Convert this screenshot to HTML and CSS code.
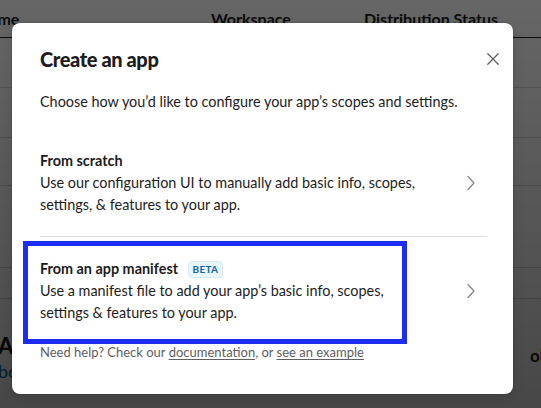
FILE: index.html
```html
<!DOCTYPE html>
<html lang="en">
<head>
<meta charset="utf-8">
<title>Create an app</title>
<link rel="stylesheet" href="styles.css">
</head>
<body>
<div class="page">
  <div class="page-inner">
    <div class="table">
      <div class="trow thead">
        <div class="c1">App Name</div>
        <div class="c2">Workspace</div>
        <div class="c3">Distribution Status</div>
      </div>
      <div class="trow r1"><div class="c1">Hos</div><div class="c2">Acme</div><div class="c3">Not distributed</div></div>
      <div class="trow r2"><div class="c1">Wh</div><div class="c2">Acme</div><div class="c3">Not distributed</div></div>
      <div class="trow r3"><div class="c1">Wh</div><div class="c2">Acme</div><div class="c3">Not distributed</div></div>
      <div class="trow tall"><div class="c1">Wh</div><div class="c2">Acme</div><div class="c3">Not distributed</div></div>
      <div class="trow short"></div>
    </div>
    <div class="section">
      <div class="sec-left">
        <div class="sec-title">Apps</div>
        <div class="sec-link">bots</div>
      </div>
      <div class="sec-right">ok</div>
    </div>
  </div>
</div>

<div class="overlay"></div>

<div class="modal" role="dialog">
  <div class="modal-head">
    <h1 class="modal-title">Create an app</h1>
    <button class="close" aria-label="Close">
      <svg width="12" height="12" viewBox="0 0 12 12"><path d="M0.8 0.8 L11.2 11.2 M11.2 0.8 L0.8 11.2" stroke="#616061" stroke-width="1.3" stroke-linecap="round" fill="none"/></svg>
    </button>
  </div>
  <p class="intro">Choose how you’d like to configure your app’s scopes and settings.</p>
  <div class="options">
    <div class="option">
      <div class="opt-text">
        <div class="opt-title">From scratch</div>
        <div class="opt-desc">Use our configuration UI to manually add basic info, scopes, settings, &amp; features to your app.</div>
      </div>
      <svg class="chev" width="10" height="16" viewBox="0 0 10 16"><path d="M2 1.5 L8 8 L2 14.5" stroke="#868686" stroke-width="1.3" fill="none" stroke-linecap="round" stroke-linejoin="round"/></svg>
    </div>
    <div class="option second">
      <div class="opt-text">
        <div class="opt-title">From an app manifest <span class="badge">BETA</span></div>
        <div class="opt-desc">Use a manifest file to add your app’s basic info, scopes, settings &amp; features to your app.</div>
      </div>
      <svg class="chev" width="10" height="16" viewBox="0 0 10 16"><path d="M2 1.5 L8 8 L2 14.5" stroke="#868686" stroke-width="1.3" fill="none" stroke-linecap="round" stroke-linejoin="round"/></svg>
      <div class="highlight"></div>
    </div>
  </div>
  <p class="help">Need help? Check our <a href="#">documentation</a>, or <a href="#">see an example</a></p>
</div>
</body>
</html>
```

FILE: styles.css
```css
* { box-sizing: border-box; }
html, body { margin: 0; padding: 0; }
body {
  width: 541px;
  height: 408px;
  overflow: hidden;
  background: #fff;
  font-family: Lato, "Noto Sans", sans-serif;
  color: #1d1c1d;
  position: relative;
}

/* background page (dimmed behind the modal) */
.page { width: 541px; height: 408px; overflow: hidden; }
.page-inner { margin-left: -60px; width: 696px; }
.trow {
  display: flex;
  align-items: center;
  border-bottom: 1px solid #d8d8d8;
  font-size: 15px;
}
.thead {
  height: 38px;
  border-bottom: 1px solid #1d1c1d;
  font-size: 16px;
  font-weight: 700;
  align-items: flex-start;
  padding-top: 9px;
}
.r1, .r2 { height: 50px; }
.r3 { height: 48px; }
.trow.tall { height: 82px; align-items: flex-start; padding-top: 16px; }
.trow.short { height: 31px; }
.c1 { width: 271px; padding-left: 4px; font-weight: 700; }
.c2 { width: 153px; }
.c3 { flex: 1; }
.section {
  display: flex;
  justify-content: space-between;
  padding-top: 34px;
}
.sec-left { padding-left: 58px; }
.sec-title { font-size: 22px; font-weight: 900; line-height: 26px; }
.sec-link { font-size: 18px; color: #1264a3; line-height: 24px; }
.sec-right { font-size: 17px; font-weight: 700; padding-top: 12px; padding-left: 4px; width: 110px; }

.overlay {
  position: absolute;
  inset: 0;
  background: linear-gradient(to bottom, rgba(0,0,0,0.6), rgba(0,0,0,0.72));
}

/* modal */
.modal {
  position: absolute;
  left: 12px;
  top: 23px;
  width: 501px;
  height: 371px;
  background: #fff;
  border-radius: 8px;
  padding: 0 26px 0 28px;
  box-shadow: 0 0 0 1px rgba(0,0,0,0.08), 0 4px 12px rgba(0,0,0,0.12);
}
.modal-head {
  display: flex;
  align-items: center;
  justify-content: space-between;
  height: 71px;
}
.modal-title {
  margin: 0;
  font-size: 20px;
  font-weight: 900;
  letter-spacing: -0.4px;
  line-height: 28px;
}
.close {
  border: 0;
  background: none;
  padding: 0;
  width: 12px;
  height: 12px;
  margin-right: -12px;
  display: flex;
}
.intro {
  margin: -3px 0 0;
  font-size: 14.4px;
  line-height: 22px;
}
.options { margin-top: 16px; }
.option {
  position: relative;
  display: flex;
  align-items: center;
  justify-content: space-between;
  height: 108px;
  border-bottom: 1px solid #dddddd;
}
.option.second {
  border-bottom: 0;
  height: 107px;
}
.opt-text { width: 385px; }
.opt-title {
  font-size: 14.4px;
  font-weight: 700;
  line-height: 22px;
}
.opt-desc {
  font-size: 14.4px;
  line-height: 22px;
}
.chev { margin-right: 11px; flex: none; }
.badge {
  display: inline-block;
  margin-left: 6px;
  padding: 0 4px;
  height: 17px;
  line-height: 15px;
  font-size: 10px;
  font-weight: 700;
  letter-spacing: 0.3px;
  color: #1264a3;
  background: #e8f5fa;
  border: 1px solid #d6ebf5;
  border-radius: 4px;
  vertical-align: 1px;
}
.highlight {
  position: absolute;
  left: -17px;
  top: 4px;
  width: 384px;
  height: 103px;
  border: 5px solid #1d2cf3;
  pointer-events: none;
}
.help {
  margin: -1px 0 0;
  font-size: 13px;
  line-height: 18px;
  color: #616061;
}
.help a { color: #616061; text-decoration: underline; text-underline-offset: 2px; }
```
